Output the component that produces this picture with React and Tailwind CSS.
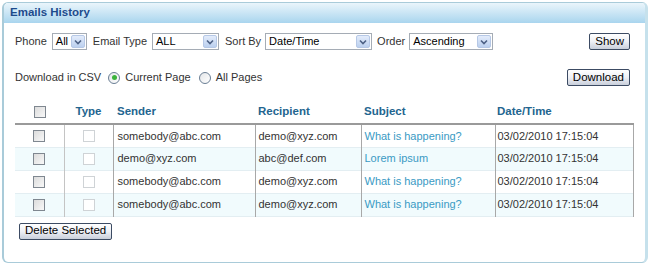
import React from 'react'

const font = { fontFamily: '"Liberation Sans", Arial, sans-serif' }

const rows = [
  { sender: 'somebody@abc.com', recipient: 'demo@xyz.com', subject: 'What is happening?', date: '03/02/2010 17:15:04' },
  { sender: 'demo@xyz.com', recipient: 'abc@def.com', subject: 'Lorem ipsum', date: '03/02/2010 17:15:04' },
  { sender: 'somebody@abc.com', recipient: 'demo@xyz.com', subject: 'What is happening?', date: '03/02/2010 17:15:04' },
  { sender: 'somebody@abc.com', recipient: 'demo@xyz.com', subject: 'What is happening?', date: '03/02/2010 17:15:04' },
]

function Select({ value, width }) {
  return (
    <div className={`flex h-[17px] items-center border border-[#a5acb5] bg-white ${width}`}>
      <span className="flex-1 truncate pl-[3px] text-[11px] leading-none text-black">{value}</span>
      <span className="m-[1px] flex h-[13px] w-[14px] items-center justify-center rounded-[2px] border border-[#b6c8e6] bg-gradient-to-b from-[#e3ecfb] to-[#bcd0ef]">
        <svg width="8" height="6" viewBox="0 0 8 6">
          <path d="M1 1.5 L4 4.5 L7 1.5" fill="none" stroke="#4d6185" strokeWidth="1.6" />
        </svg>
      </span>
    </div>
  )
}

function Button({ children }) {
  return (
    <button className="flex h-[17px] items-center rounded-[2px] border border-[#3c4b63] bg-gradient-to-b from-[#ffffff] via-[#eef0f5] to-[#c9cfdb] px-[5px] text-[11.5px] leading-none text-black">
      {children}
    </button>
  )
}

function Radio({ checked }) {
  return (
    <span className="flex h-[12px] w-[12px] items-center justify-center rounded-full border border-[#6a7e94] bg-gradient-to-br from-[#e4e6e8] to-white">
      {checked && <span className="h-[5px] w-[5px] rounded-full bg-[#3bb33b]" />}
    </span>
  )
}

function Check({ light }) {
  return (
    <span
      className={`inline-block h-[12px] w-[12px] border ${
        light ? 'border-[#cfd3d6] bg-white' : 'border-[#7f8790] bg-gradient-to-br from-[#dcdcdc] to-[#f8f8f8]'
      }`}
    />
  )
}

export default function App() {
  return (
    <div className="h-[269px] w-[650px] bg-white pl-[2px] pt-[2px]" style={font}>
      <div className="flex h-[261px] w-[646px] flex-col overflow-hidden rounded-[6px] border border-l-[2px] border-r-[3px] border-[#a9cbd9] border-r-[#c6e1ec]">
        <div className="flex h-[20px] items-center bg-gradient-to-b from-[#eaf5fb] to-[#a9d5ee] pl-[6px]">
          <span className="text-[11.5px] font-bold text-[#1e4b8c]">Emails History</span>
        </div>

        <div className="flex flex-col px-[11px]">
          <div className="mt-[10px] flex items-center text-[11px] text-[#333]">
            <span>Phone</span>
            <div className="ml-[5px]"><Select value="All" width="w-[35px]" /></div>
            <span className="ml-[6px]">Email Type</span>
            <div className="ml-[5px]"><Select value="ALL" width="w-[67px]" /></div>
            <span className="ml-[6px]">Sort By</span>
            <div className="ml-[4px]"><Select value="Date/Time" width="w-[107px]" /></div>
            <span className="ml-[5px]">Order</span>
            <div className="ml-[4px]"><Select value="Ascending" width="w-[84px]" /></div>
            <div className="ml-auto mr-[4px]"><Button>Show</Button></div>
          </div>

          <div className="mt-[19px] flex items-center text-[11px] text-[#333]">
            <span>Download in CSV</span>
            <span className="ml-[7px]"><Radio checked /></span>
            <span className="ml-[5px]">Current Page</span>
            <span className="ml-[8px]"><Radio /></span>
            <span className="ml-[5px]">All Pages</span>
            <div className="ml-auto mr-[4px]"><Button>Download</Button></div>
          </div>

          <table className="mt-[14px] w-[619px] border-collapse text-[11px]">
            <thead>
              <tr className="h-[24px] border-b-2 border-[#9a9a9a] text-left text-[11.5px] font-bold text-[#23658f]">
                <th className="w-[49px] text-center align-middle"><span className="flex justify-center"><Check /></span></th>
                <th className="w-[49px] text-center">Type</th>
                <th className="w-[142px] pl-[4px]">Sender</th>
                <th className="w-[106px] pl-[3px]">Recipient</th>
                <th className="w-[134px] pl-[3px]">Subject</th>
                <th className="pl-[2px]">Date/Time</th>
              </tr>
            </thead>
            <tbody>
              {rows.map((r, i) => (
                <tr key={i} className={`h-[23px] border-b border-[#e3eef2] ${i % 2 ? 'bg-[#f1fbfd]' : 'bg-white'}`}>
                  <td className="border-r border-[#c4c4c4]"><span className="flex justify-center"><Check /></span></td>
                  <td className="border-r border-[#a8a8a8]"><span className="flex justify-center"><Check light /></span></td>
                  <td className="border-r border-[#a8a8a8] pl-[4px] text-[#333]">{r.sender}</td>
                  <td className="border-r border-[#a8a8a8] pl-[3px] text-[#333]">{r.recipient}</td>
                  <td className="border-r border-[#a8a8a8] pl-[3px] text-[#3a9ac4]">{r.subject}</td>
                  <td className="border-r border-[#a8a8a8] pl-[2px] text-[#333]">{r.date}</td>
                </tr>
              ))}
            </tbody>
          </table>

          <div className="mt-[6px] ml-[4px] flex">
            <Button>Delete Selected</Button>
          </div>
        </div>
      </div>
    </div>
  )
}
